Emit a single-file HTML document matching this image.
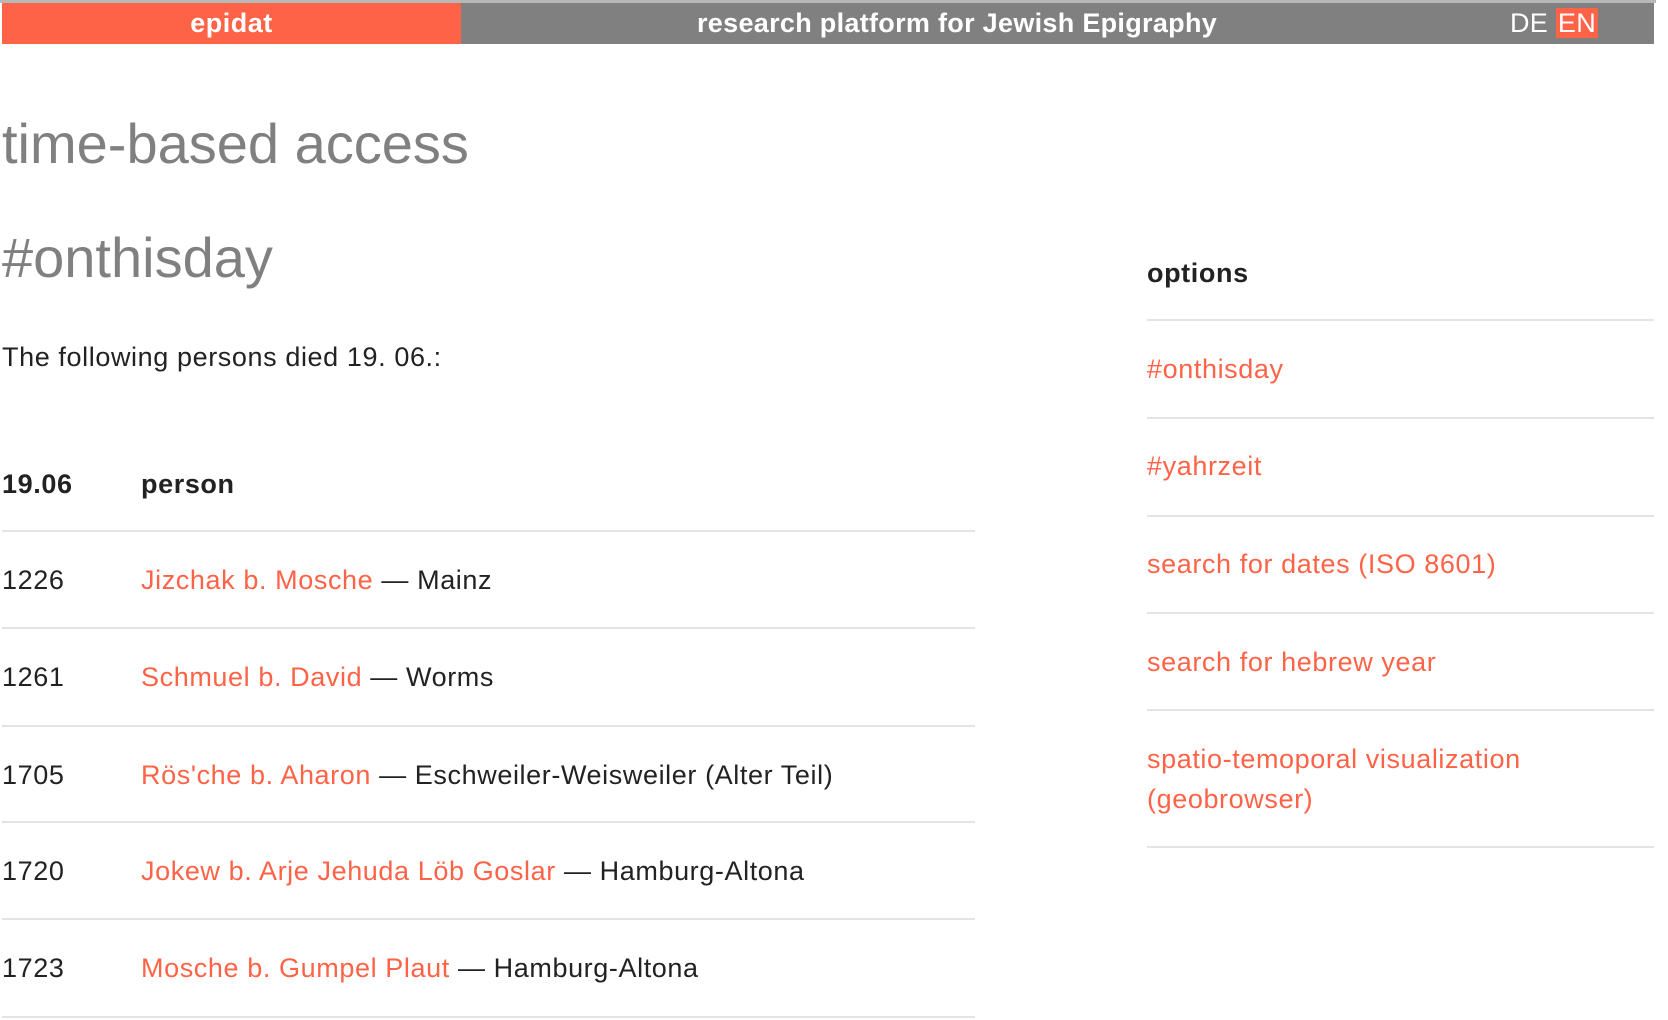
<!DOCTYPE html>
<html><head><meta charset="utf-8"><style>
body{margin:0;width:1668px;height:1020px;overflow:hidden;background:#fff;font-family:"Liberation Sans",sans-serif;position:relative;color:#222}
.a{position:absolute;white-space:nowrap}
.top{position:absolute;left:0;top:0;width:1656px;height:3px;background:#b8b8b8}
.bar{position:absolute;left:2px;top:3px;width:1652px;height:41px;background:#808080}
.logo{position:absolute;left:2px;top:3px;width:459px;height:41px;background:#ff6347;color:#fff;font-size:27px;line-height:41px;text-align:center;font-weight:bold;letter-spacing:0.5px}
.t{color:#fff;font-size:27px;line-height:41px;font-weight:bold;letter-spacing:0.3px}
.r{color:#ff6347}
.ln{position:absolute;height:2px;background:#e4e4e4}
h1{position:absolute;margin:0;left:2px;font-weight:normal;color:#808080;font-size:56px;letter-spacing:0px}
.c{font-size:27px;line-height:30px;letter-spacing:0.6px}
</style></head><body>
<div class="top"></div><div class="bar"></div>
<div class="logo">epidat</div>
<div class="a t" style="left:697px;top:3px">research platform for Jewish Epigraphy</div>
<div class="a t" style="left:1510px;top:3px;font-weight:normal">DE <span style="background:#ff6347;padding:0 2px">EN</span></div>
<h1 style="top:111px">time-based access</h1>
<h1 style="top:225px">#onthisday</h1>
<div class="a c" style="left:2px;top:342px">The following persons died 19. 06.:</div>
<div class="a c" style="left:2px;top:469px;font-weight:bold">19.06</div>
<div class="a c" style="left:141px;top:469px;font-weight:bold">person</div>
<div class="ln" style="left:2px;top:530px;width:973px"></div>
<div class="a c" style="left:2px;top:565px">1226</div><div class="a c" style="left:141px;top:565px"><span class="r">Jizchak b. Mosche</span> — Mainz</div>
<div class="ln" style="left:2px;top:627px;width:973px"></div>
<div class="a c" style="left:2px;top:662px">1261</div><div class="a c" style="left:141px;top:662px"><span class="r">Schmuel b. David</span> — Worms</div>
<div class="ln" style="left:2px;top:725px;width:973px"></div>
<div class="a c" style="left:2px;top:760px">1705</div><div class="a c" style="left:141px;top:760px"><span class="r">Rös'che b. Aharon</span> — Eschweiler-Weisweiler (Alter Teil)</div>
<div class="ln" style="left:2px;top:821px;width:973px"></div>
<div class="a c" style="left:2px;top:856px">1720</div><div class="a c" style="left:141px;top:856px"><span class="r">Jokew b. Arje Jehuda Löb Goslar</span> — Hamburg-Altona</div>
<div class="ln" style="left:2px;top:918px;width:973px"></div>
<div class="a c" style="left:2px;top:953px">1723</div><div class="a c" style="left:141px;top:953px"><span class="r">Mosche b. Gumpel Plaut</span> — Hamburg-Altona</div>
<div class="ln" style="left:2px;top:1016px;width:973px"></div>
<div class="a c" style="left:1147px;top:258px;font-weight:bold">options</div>
<div class="ln" style="left:1147px;top:319px;width:507px"></div>
<div class="a c r" style="left:1147px;top:354px">#onthisday</div>
<div class="ln" style="left:1147px;top:417px;width:507px"></div>
<div class="a c r" style="left:1147px;top:451px">#yahrzeit</div>
<div class="ln" style="left:1147px;top:515px;width:507px"></div>
<div class="a c r" style="left:1147px;top:549px">search for dates (ISO 8601)</div>
<div class="ln" style="left:1147px;top:612px;width:507px"></div>
<div class="a c r" style="left:1147px;top:647px">search for hebrew year</div>
<div class="ln" style="left:1147px;top:709px;width:507px"></div>
<div class="a c r" style="left:1147px;top:739px;line-height:40px">spatio-temoporal visualization<br>(geobrowser)</div>
<div class="ln" style="left:1147px;top:846px;width:507px"></div>
</body></html>
